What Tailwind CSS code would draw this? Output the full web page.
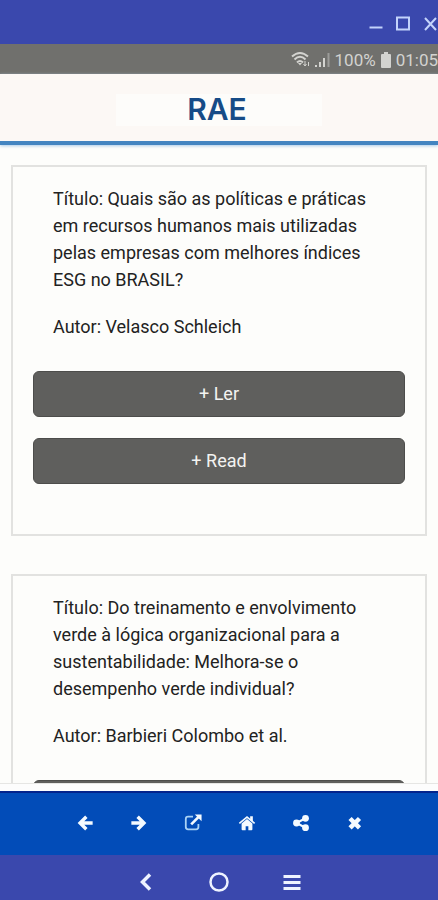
<!DOCTYPE html>
<html lang="pt-BR">
<head>
<meta charset="utf-8">
<meta name="viewport" content="width=device-width, initial-scale=1">
<title>RAE</title>
<script src="https://cdn.jsdelivr.net/npm/@tailwindcss/browser@4"></script>
</head>
<body class="flex h-screen flex-col overflow-hidden bg-[#fdfdfb] font-['Roboto',sans-serif] text-lg text-[#222]">

<!-- Window controls -->
<div class="flex h-11 shrink-0 items-end justify-end gap-[11px] bg-[#3a48ad] pb-3 text-[#c3d3fb]">
  <button aria-label="Minimizar"><svg class="size-4" viewBox="0 0 16 16" fill="none" stroke="currentColor" stroke-width="2"><path d="M1.500 11.500h13"/></svg></button>
  <button aria-label="Maximizar"><svg class="size-4" viewBox="0 0 16 16" fill="none" stroke="currentColor" stroke-width="2"><path d="M2 1.500h12v12H2z"/></svg></button>
  <button aria-label="Fechar janela"><svg class="size-4" viewBox="0 0 16 16" fill="none" stroke="currentColor" stroke-width="2"><path d="M3 2l11 12M14 2L3 14"/></svg></button>
</div>

<!-- Status bar -->
<div class="flex h-[30px] shrink-0 items-center justify-end bg-[#70706d] pt-0.5 text-[17px] text-[#d3d3d0]">
  <svg class="mr-1 h-5 w-5" viewBox="0 0 20 20" fill="none" stroke="currentColor" stroke-width="2"><path d="M1 6.500Q9-.5 17 6.500M3.500 9.500Q9 4 14.500 9.500M6 12.500Q9 9.500 12 12.500"/><path d="M7 13h4l-2 2.500z" fill="currentColor" stroke="none"/><path d="M14 11v5M12.500 14l1.500 2 1.500-2M17.500 16v-4" stroke-width="1"/></svg>
  <svg class="mr-1 h-5 w-4" viewBox="0 0 16 20" fill="currentColor"><path d="M0 15h2v2H0zM4 12h2v5H4zM8 8h2v9H8z"/><path d="M12.500 3h2v14h-2z" opacity=".45"/></svg>
  <span class="mr-1">100%</span>
  <svg class="mr-1 h-4 w-3" viewBox="0 0 12 16" fill="currentColor"><path d="M4 0h4v2h2q1 0 1 1v12q0 1-1 1H2q-1 0-1-1V3q0-1 1-1h2z"/></svg>
  <span>01:05</span>
</div>

<header class="flex h-[71px] shrink-0 items-center justify-center border-b-4 border-[#4385c1] bg-[#fcf8f5] pt-1 shadow-[0_1px_3px_#a9cbe8]">
  <h1 class="flex h-8 w-[206px] items-center justify-center bg-[#fdfcfa] pr-1 font-['Inter',sans-serif] text-[30px] font-semibold text-[#164b87]">RAE</h1>
</header>

<main class="min-h-0 flex-1 overflow-x-hidden overflow-y-auto px-[11px] pt-5 [scrollbar-width:none]">
  <article class="mb-[38px] border-2 border-[#e2e2e0] px-5 pt-[18px] pb-[50px]">
    <div class="flex flex-col gap-5 px-5 leading-[27px]">
      <p>Título: Quais são as políticas e práticas em recursos humanos mais utilizadas pelas empresas com melhores índices ESG no BRASIL?</p>
      <p>Autor: Velasco Schleich</p>
    </div>
    <div class="mt-[31px] flex flex-col gap-[21px]">
      <button class="h-[46px] rounded-md border border-[#4d4d4b] bg-[#5f5f5d] text-[#f3f3f1]">+ Ler</button>
      <button class="h-[46px] rounded-md border border-[#4d4d4b] bg-[#5f5f5d] text-[#f3f3f1]">+ Read</button>
    </div>
  </article>
  <article class="border-2 border-[#e2e2e0] px-5 pt-[18px] pb-[50px]">
    <div class="flex flex-col gap-5 px-5 leading-[27px]">
      <p>Título: Do treinamento e envolvimento verde à lógica organizacional para a sustentabilidade: Melhora-se o desempenho verde individual?</p>
      <p>Autor: Barbieri Colombo et al.</p>
    </div>
    <div class="mt-[31px] flex flex-col gap-[21px]">
      <button class="h-[46px] rounded-md border border-[#4d4d4b] bg-[#5f5f5d] text-[#f3f3f1]">+ Ler</button>
      <button class="h-[46px] rounded-md border border-[#4d4d4b] bg-[#5f5f5d] text-[#f3f3f1]">+ Read</button>
    </div>
  </article>
</main>

<!-- App toolbar -->
<footer class="shrink-0">
  <div class="h-2 border-t border-[#e6e6e4] bg-[#fdfdfd]"></div>
  <div class="flex h-16 items-center justify-center gap-9 border-t-2 border-[#03248c] bg-[#024cb8] pb-0.5 pl-0.5 text-[#f4faff]">
    <button aria-label="Voltar"><svg class="size-[18px]" viewBox="0 0 20 20" fill="none" stroke="currentColor" stroke-width="3.800"><path d="M11.500 3L4.500 10l7 7M5 10H18.500"/></svg></button>
    <button aria-label="Avançar"><svg class="size-[18px]" viewBox="0 0 20 20" fill="none" stroke="currentColor" stroke-width="3.800"><path d="M8.500 3l7 7-7 7M15 10H1.500"/></svg></button>
    <button aria-label="Abrir em nova janela"><svg class="size-[18px]" viewBox="0 0 20 20" fill="none" stroke="currentColor" stroke-width="2"><path d="M10 3H4.500Q2 3 2 5.500v9Q2 17 4.500 17h9q2.500 0 2.500-2.500V11" stroke="#a9d2f5"/><path d="M8 11.500l8-8" stroke-width="3"/><path d="M12 .5h7.500V8z" fill="currentColor" stroke="none"/></svg></button>
    <button aria-label="Início"><svg class="size-[18px]" viewBox="0 0 20 20" fill="currentColor"><path d="M10 5.500L4 10.500V17q0 1 1 1h3.500v-4.500h3V18H15q1 0 1-1v-6.500z"/><path d="M1.500 10.500L10 3.500l8.500 7" fill="none" stroke="currentColor" stroke-width="1.800"/><path d="M13.500 2.500H16.500v6l-3-2.500z"/></svg></button>
    <button aria-label="Compartilhar"><svg class="size-[18px]" viewBox="0 0 20 20" fill="currentColor"><circle cx="5" cy="10" r="3.800"/><circle cx="15" cy="4.800" r="3.800"/><circle cx="15" cy="15.200" r="3.800"/><path d="M15 4.800L5 10l10 5.200" fill="none" stroke="currentColor" stroke-width="2.400"/></svg></button>
    <button aria-label="Fechar"><svg class="size-[18px]" viewBox="0 0 20 20" fill="none" stroke="currentColor" stroke-width="5"><path d="M4.500 5l10.500 10.500M15 5L4.500 15.500"/></svg></button>
  </div>
  <nav class="flex h-[45px] items-center justify-center gap-[49px] bg-[#3a48ad] pt-2 text-[#eef3ff]">
    <button aria-label="Anterior"><svg class="size-6" viewBox="0 0 24 24" fill="none" stroke="currentColor" stroke-width="3.500"><path d="M16 4.500L8.500 12l7.500 7.500"/></svg></button>
    <button aria-label="Tela inicial"><svg class="size-6" viewBox="0 0 24 24" fill="none" stroke="currentColor" stroke-width="2.500"><circle cx="12" cy="12" r="8.500"/></svg></button>
    <button aria-label="Menu"><svg class="size-6" viewBox="0 0 24 24" fill="none" stroke="currentColor" stroke-width="3.200"><path d="M3.500 6.500h17M3.500 12.500h17M3.500 18.500h17"/></svg></button>
  </nav>
</footer>
</body>
</html>
